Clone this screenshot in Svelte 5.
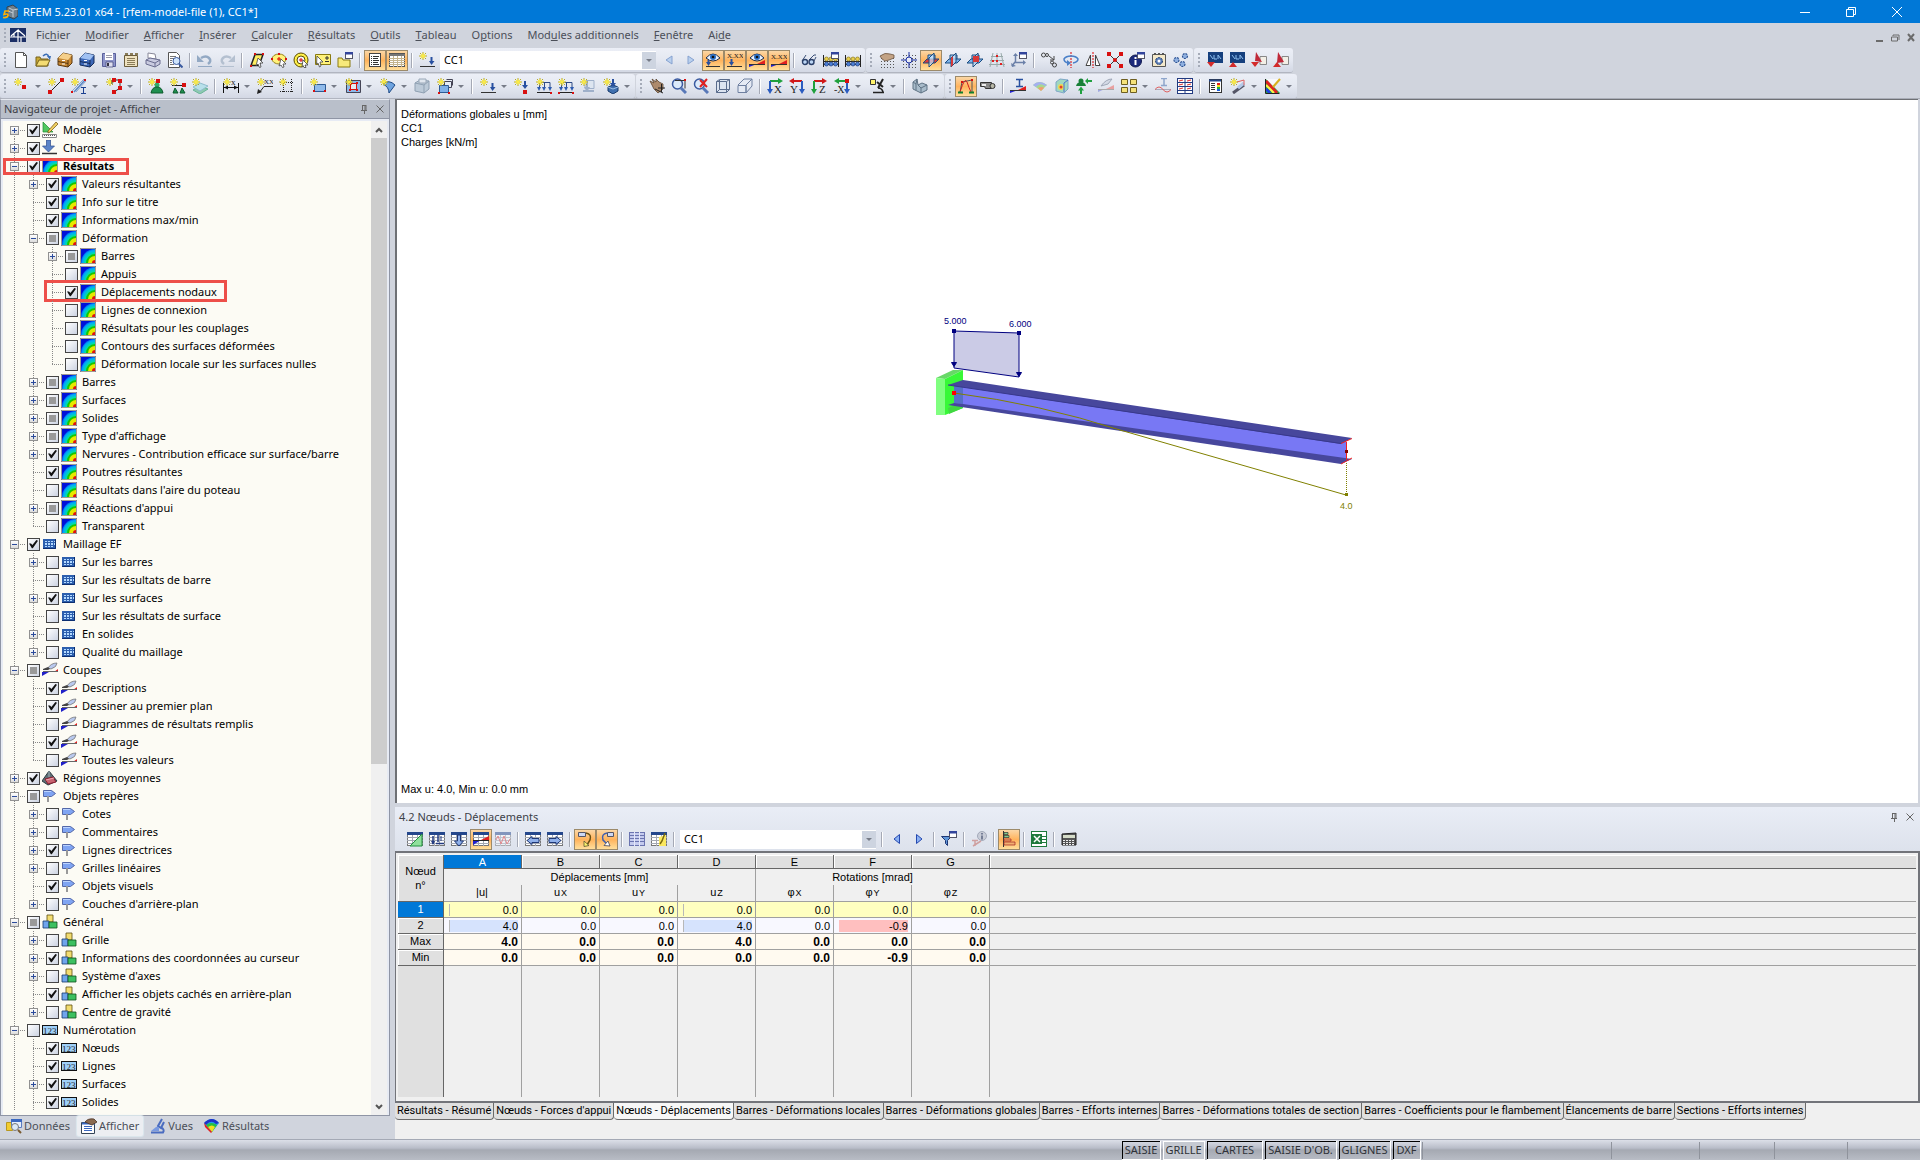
<script lang="ts">
	type Check = 'on' | 'off' | 'partial';
	type Row = [level: number, toggle: string, check: Check, icon: string, label: string];

	// shared bits of the toolbar glyphs, all on a 16x16 grid
	const star =
		'<path d="M4 0v8M0 4h8M1 1l6 6M7 1L1 7" stroke="#b5a82c"/><path d="M4 1v6M1 4h6M2 2l4 4M6 2L2 6" stroke="#ffee3c"/>';
	const dot = (x: number, y: number) => `<rect x="${x}" y="${y}" width="4" height="4" fill="#d81010"/>`;
	const speck = (x: number, y: number) => `<rect x="${x}" y="${y}" width="2" height="2" fill="#d81010"/>`;
	const letter = (x: number, y: number, text: string, size = 9) =>
		`<text x="${x}" y="${y}" font-size="${size}" font-family="Liberation Serif, serif" fill="#222">${text}</text>`;
	const sheet =
		'<rect x=".5" y="1.5" width="15" height="13" fill="#fff" stroke="#777"/><path d="M0 6.500h16M0 9.500h16M0 12.500h16M5.500 4v11M10.500 4v11" stroke="#a3a8b2"/><rect x="0" y="1" width="16" height="3" fill="#24478c"/>';
	const windowBox =
		'<rect x="8.5" y=".5" width="7" height="6" fill="#fff" stroke="#556"/><rect x="8" y="0" width="8" height="2.5" fill="#33459c"/>';
	const wedge =
		'<path d="M0 15V12L8 12z" fill="#2020d0"/><path d="M8 12L16 8v4z" fill="#e02020"/><path d="M0 12.500h16" stroke="#333"/>';
	const eye =
		'<path d="M1 6q7-8 14 0q-7 6-14 0z" fill="#e9f2ff" stroke="#1b2c4c"/><circle cx="8" cy="5" r="3" fill="#2b6fc4"/><circle cx="8" cy="5" r="1.3" fill="#111"/>';
	const grid =
		'<path d="M2 3.500h13M2 6.500h13M2 9.500h13M2 12.500h13M2 15.500h13" stroke="#555" stroke-dasharray="1 2"/>';
	const nodes =
		'<path d="M3 3l10 10M13 3L3 13" stroke="#333"/>' + dot(0, 0) + dot(12, 0) + dot(0, 12) + dot(12, 12);
	const axis = (a: string, b: string, flip = false) =>
		flip
			? `<path d="M13 3H4" stroke="${a}" stroke-width="2"/><path d="M0 3l5-3v6z" fill="${a}"/><path d="M13 3v9" stroke="${b}" stroke-width="2"/><path d="M13 16l-3-5h6z" fill="${b}"/>`
			: `<path d="M3 3h9" stroke="${a}" stroke-width="2"/><path d="M16 3l-5-3v6z" fill="${a}"/><path d="M3 3v9" stroke="${b}" stroke-width="2"/><path d="M3 16l-3-5h6z" fill="${b}"/>`;
	const drawer = (light: string, base: string, dark: string) =>
		`<path d="M1 6l5-5 9 2v8l-4 4-10-2z" fill="${base}" stroke="${dark}"/><path d="M1 6l5-5 9 2-4 5z" fill="${light}"/><path d="M11 8v7M1 9.500l10 2" stroke="${dark}"/><path d="M5 8.500h3M5 12h3" stroke="#fff"/>`;
	const abacus =
		'<path d="M.5 3v12M15.500 3v12M1 9.500h14M1 12.500h14" stroke="#222"/><g fill="#e9cf4b" stroke="#8a7820" stroke-width=".7"><circle cx="3.500" cy="7" r="2"/><circle cx="8" cy="7" r="2"/><circle cx="12.500" cy="7" r="2"/></g><g fill="#4b7fd6" stroke="#1b3a78" stroke-width=".7"><circle cx="3.500" cy="12" r="2"/><circle cx="8" cy="12" r="2"/><circle cx="12.500" cy="12" r="2"/></g>';
	const lens =
		'<circle cx="6.500" cy="6" r="5" fill="#dceafa" stroke="#3a5aa0" stroke-width="1.500"/><path d="M10 10l5 5" stroke="#5878b8" stroke-width="3"/>';
	const plane = (slab: string) =>
		`<path d="M5 3h7v7H5z" fill="#a9cef2" stroke="#1b4c80"/><path d="M0 11l4-4h12l-4 4z" fill="${slab}" stroke="#1b4c80"/><path d="M6 6l5-5v9l-5 5z" fill="#cfe4fb" stroke="#1b4c80" fill-opacity=".7"/>`;
	const loads =
		'<path d="M3 4.500h11v6M3.500 4v7M8.500 4v7" stroke="#2d4a86"/><path d="M1 9h4l-2 4zM6 9h4l-2 4zM12 9h4l-2 4z" fill="#2d5bb0"/><path d="M1 14.500h14" stroke="#222"/>';
	const dlubal =
		'<rect x="1" y="0" width="15" height="11" fill="#16407e"/><path d="M3 3l3 4M7 3v4h3M11 7V3l3 4" stroke="#8fc0f0"/>';

	const glyphs: Record<string, string> = {
		app: '<path d="M5 3l6-2 5 4v7l-4 3-7-3z" fill="#71808c" stroke="#34424e"/><path d="M7 4l4 2v7M11 6l5-1M6 7l5 2" stroke="#c2ccd4"/><path d="M7 7H3L2 10.500q4-1.500 4 1Q5.500 14 1 13.500" stroke="#ffb000" stroke-width="1.600"/>',
		doc: '<rect width="16" height="14" y="1" fill="#1c2f66"/><path d="M0 10h16M1 9l7-6v12M8 3l7 6M11 10v5M4 7v3" stroke="#fff" stroke-width="1.200"/>',
		new: '<path d="M2.500.5h8l3 3v12h-11z" fill="#fff" stroke="#555"/><path d="M10.500.5v3h3" stroke="#555"/>',
		open: '<path d="M1 14V5h4l1 2h7v7z" fill="#c9a935" stroke="#76631d"/><path d="M1 14l3-6h11l-3 6z" fill="#f4dc72" stroke="#76631d"/><path d="M8 4q4-4 6 1" stroke="#3a6db5" stroke-width="1.500"/><path d="M12 4h4l-1 4z" fill="#3a6db5"/>',
		drawer: drawer('#f5cf8a', '#c98a35', '#5a3810'),
		drawerBlue: drawer('#9fc0f2', '#3d68b8', '#142c5c'),
		save: '<path d="M1.500 1.500h13v13h-13z" fill="#8d94c9" stroke="#5a609c"/><path d="M4 1h8v7H4z" fill="#fff"/><path d="M5 10h7v5H5z" fill="#dde" stroke="#3d4377" stroke-width=".7"/><path d="M5 3.500h6M5 5.500h6" stroke="#99a"/><path d="M6 11h2v3H6z" fill="#334"/>',
		planner:
			'<path d="M1.500 3.500h13v11h-13z" fill="#efe2c0" stroke="#6b5c3a"/><path d="M2 1h3v2H2zM7 1h3v2H7zM12 1h3v2h-3z" fill="#8a7c58"/><path d="M4 6.500h8M4 8.500h8M4 10.500h8M4 12.500h8" stroke="#8a7c58"/>',
		print: '<path d="M3 1l7 1 1 5-8-1z" fill="#fff" stroke="#889"/><path d="M1 8l4-2 10 2v4l-5 3-9-3z" fill="#c9cbe0" stroke="#6a6d90"/><path d="M1 8l9 3v4M10 11l5-3" stroke="#6a6d90"/>',
		preview:
			'<path d="M1.500.5h8l3 3v12h-11z" fill="#fff" stroke="#555"/><path d="M3 4.500h6M3 6.500h4M3 8.500h2M3 10.500h2M3 12.500h4" stroke="#777"/><circle cx="9.500" cy="9" r="3.500" fill="#cfe4fb" stroke="#3a5aa0"/><path d="M12 12l3.500 3.500" stroke="#3a5aa0" stroke-width="2"/>',
		undo: '<path d="M4 6q5-3 8 0t-1 6" stroke="#93a9c4" stroke-width="2.500"/><path d="M0 3v7h7z" fill="#93a9c4"/><path d="M1 14.500h14" stroke="#93a9c4"/>',
		redo: '<path d="M12 6Q7 3 4 6t1 6" stroke="#b4c0d0" stroke-width="2.500"/><path d="M16 3v7H9z" fill="#b4c0d0"/><path d="M1 14.500h14" stroke="#b4c0d0"/>',
		selRhomb:
			'<path d="M2 13.500L6 2.500h8l-4 11z" fill="#ffee60" stroke="#222" stroke-width="1.500"/>' +
			speck(1, 13) + speck(5, 1) + speck(13, 1) +
			'<path d="M9 6l5 5h-3l1 4-1.500.5L9 12l-2 2z" fill="#fff" stroke="#444" stroke-width=".8"/>',
		selEllipse:
			'<ellipse cx="8" cy="7" rx="7" ry="5" fill="#fff27a" stroke="#9a8420"/><path d="M8 5v4M6 7h4" stroke="#d00"/>' +
			speck(0, 6) + speck(7, 1) + speck(14, 6) +
			'<path d="M10 7l5 5h-3l1 3-1.500.5L10 13l-2 1z" fill="#fff" stroke="#444" stroke-width=".8"/>',
		selRing:
			'<circle cx="8" cy="8" r="7" fill="#fff04a" stroke="#5d4e00"/><circle cx="8" cy="8" r="4" fill="#f4f6fb" stroke="#5d4e00"/><path d="M8 6v4M6 8h4" stroke="#d00"/><path d="M10 8l5 5h-3l1 2.500h-2l-1-2-1 1z" fill="#fff" stroke="#444" stroke-width=".8"/>',
		selNote:
			'<path d="M.5 2.500h15v10H.5z" fill="#fff27a" stroke="#8a7a10"/><path d="M10 6h4M12 4v4M10 9.500h4" stroke="#333"/><path d="M2 4l6 6H5l1 4-1.500 1L3 11l-1.500 1z" fill="#fff" stroke="#444" stroke-width=".8"/>',
		folder: '<path d="M1 6h4l1 2h7v7H1z" fill="#f8ea7a" stroke="#8a7a10"/>' + windowBox,
		list: '<rect x="2.500" y="1.500" width="11" height="13" fill="#fff" stroke="#444"/><path d="M4 4.500h1M4 6.500h1M4 8.500h1M4 10.500h1M4 12.500h1M6 4.500h6M6 6.500h5M6 8.500h6M6 10.500h5M6 12.500h6" stroke="#333"/>',
		table: '<rect x=".5" y="1.500" width="15" height="13" fill="#fff" stroke="#555"/><path d="M0 6.500h16M0 8.500h16M0 10.500h16M0 12.500h16M4.500 4v11M8.500 4v11M12.500 4v11" stroke="#c4b48e"/><path d="M0 2h16v2H0z" fill="#777"/>',
		loadCase:
			star + '<path d="M1 14.500h15" stroke="#333"/><path d="M12.500 5v6" stroke="#2850a0" stroke-width="2"/><path d="M10 9h5.500l-3 4z" fill="#2850a0"/>',
		prev: '<path d="M11 4v8L5 8z" fill="#b9d0ee" stroke="#86a2d0"/>',
		next: '<path d="M5 4v8l6-4z" fill="#b9d0ee" stroke="#86a2d0"/>',
		prevBold: '<path d="M10.500 3.500v9L5 8z" fill="#8ab0f2" stroke="#2448b0"/>',
		nextBold: '<path d="M5.500 3.500v9L11 8z" fill="#8ab0f2" stroke="#2448b0"/>',
		eyeLoad:
			eye + '<path d="M3.500 8v4" stroke="#2850a0" stroke-width="2"/><path d="M1 10h5l-2.500 4z" fill="#2850a0"/><path d="M1 14.500h14" stroke="#333"/>',
		valLoad:
			letter(0, 6, 'X.XX', 7) +
			'<path d="M4.500 7v4" stroke="#2850a0" stroke-width="2"/><path d="M2 10h5l-2.500 4z" fill="#2850a0"/><path d="M0 14.500h15" stroke="#333"/>',
		eyeRes: eye + wedge,
		valRes: letter(0, 7, 'X.XX', 7) + wedge,
		glasses:
			'<path d="M1 9l4-6M8 8l5-5h2" stroke="#3b5078"/><circle cx="4" cy="10" r="2.500" fill="#bcd6f5" stroke="#2a3f68" stroke-width="1.400"/><circle cx="10.500" cy="10" r="2.500" fill="#bcd6f5" stroke="#2a3f68" stroke-width="1.400"/><path d="M13 9l2-4" stroke="#3b5078"/>',
		abacusWin: abacus + windowBox,
		abacus,
		handGrid: grid + '<path d="M1 4q5-4 10-2l4 1v3l-5 2-4 1-3-2z" fill="#c3a385" stroke="#6c5440" stroke-width=".8"/>',
		snap: grid + '<path d="M8 0v16M0 8h16" stroke="#1a2fa0"/><circle cx="8" cy="8" r="3" fill="#e9ecf5" stroke="#1a2fa0"/>',
		planeXY: plane('#d83838'),
		planeXZ: plane('#7fb4ea') + '<path d="M6 6l2-2v9l-2 2z" fill="#d83838"/>',
		planeYZ: plane('#7fb4ea') + '<path d="M6 4h6v6H6z" fill="#d83838"/>',
		lineGrid:
			'<path d="M4 1L1 15M8 1v14M12 1l3 14M2 4.500h12M1 8.500h14M0 12.500h16" stroke="#9aa"/><path d="M7 3h2v2H7zM3 8h2v2H3zM11 11h2v2h-2zM7 8h2v2H7z" fill="#e02020"/>',
		csys: '<path d="M4.500 3v7M4 10.500h8M4 10l-3 4" stroke="#6b80a8" stroke-width="1.500"/><path d="M2 4l2.500-3L7 4zM12 8l3 2.500-3 2.500zM0 11l1 4 4-1z" fill="#6b80a8"/>' + windowBox,
		move: '<g stroke="#444"><circle cx="2.500" cy="3" r="2"/><circle cx="6" cy="3" r="1.500"/><circle cx="11" cy="10.500" r="1.500"/><circle cx="13.500" cy="13" r="2"/><path d="M8 4l5 4M13 4v4H9"/></g>',
		rotate:
			'<path d="M8 0v16" stroke="#d00" stroke-dasharray="2 1"/><path d="M5 11Q1 10 1 7q2-3 7-3t7 3q0 3-5 4" stroke="#4a80c8" stroke-width="1.500"/><path d="M4 8v6l4-3z" fill="#4a80c8"/>',
		mirror: '<path d="M8 0v16" stroke="#d00" stroke-dasharray="2 1"/><path d="M5.500 3v10.500H1zM10.500 3v10.500H15z" fill="#fff" stroke="#444"/>',
		cross: nodes + '<circle cx="8" cy="8" r="2" fill="#d81010"/>',
		info: '<circle cx="6.500" cy="9" r="6" fill="#1c2a7c" stroke="#111a50"/><path d="M6.500 8v5M6.500 5v2" stroke="#fff" stroke-width="2"/>' + windowBox,
		gearDoc:
			'<path d="M1.500 2.500h13v12h-13z" fill="#f4e9ca" stroke="#555"/><path d="M3 1h2v2H3zM7 1h2v2H7zM11 1h2v2h-2z" fill="#555"/><circle cx="8" cy="9" r="3.500" fill="#5a7db8" stroke="#24406f" stroke-dasharray="2 1"/><circle cx="8" cy="9" r="1.500" fill="#fff"/>',
		gears:
			'<g fill="#8fb0e0" stroke="#2f5494" stroke-width="1.200"><circle cx="12" cy="4" r="2.500" stroke-dasharray="2 1"/><circle cx="3.500" cy="8" r="2.500" stroke-dasharray="2 1"/><circle cx="9.500" cy="12" r="2.500" stroke-dasharray="2 1"/></g>',
		dlIn: dlubal + '<path d="M0 10h8l-4 5z" fill="#d32a2a"/>',
		dlOut: dlubal + '<path d="M0 15h8l-4-5z" fill="#d32a2a"/>',
		acIn: '<path d="M9 4.500h6.500v8H9z" fill="#f3efe6" stroke="#888"/><path d="M5 0l6 10-7-1z" fill="#c02838"/><path d="M0 10h8l-4 5z" fill="#d32a2a"/>',
		acOut: '<path d="M9 4.500h6.500v8H9z" fill="#f3efe6" stroke="#888"/><path d="M5 0l6 10-7 1z" fill="#c02838"/><path d="M0 15h8l-4-5z" fill="#d32a2a"/>',

		node: star + dot(8, 7),
		line: '<path d="M2 14L14 2" stroke="#222"/>' + dot(0, 12) + dot(12, 0) + star,
		member:
			'<path d="M1 13L13 1M5 14L15 3" stroke="#8aa6cc"/><path d="M3 14L14 2" stroke="#5a86c4" stroke-width="1.500"/>' +
			star + speck(0, 13) + speck(13, 1) + '<path d="M10 9.500h5M12.500 10v5M10 15.500h5" stroke="#1b4090"/>',
		polyline: star + '<path d="M6 6V2h8v8l-6 4" stroke="#333"/>' + dot(6, 0) + dot(12, 1) + dot(6, 12) + dot(12, 8),
		support: '<circle cx="9" cy="7" r="2.500" fill="#2fae6a"/><path d="M3 15q1-6 6-6t6 6z" fill="#1f8f50" stroke="#0c5a2c"/>' + star + dot(8, 1),
		hinge: '<path d="M2 7.500h12" stroke="#222"/>' + dot(12, 5) + '<path d="M3 15l2-5 3 5zM10 15l2-5 3 5z" fill="#1f8f50" stroke="#0c5a2c"/>' + star,
		elastic: '<path d="M1 12l7-4 8 3-8 5z" fill="#8ecab0" stroke="#6ab49a"/><path d="M1 9l7-4 8 3-8 5z" fill="#b8e0ea" stroke="#8fbccc"/>' + star,
		dim: '<path d="M1 9.500h14M.5 5v10M15.500 5v10" stroke="#111"/><path d="M1 9.500l4-2v4zM15 9.500l-4-2v4z" fill="#111"/>' + letter(8, 7, 'x', 9) + star,
		comment: '<path d="M2 15l5-6.500h9" stroke="#222"/><path d="M0 16l1-5 4 3z" fill="#222"/>' + letter(7, 6, 'XX', 7) + star,
		grid: '<path d="M4.500 1v14M12.500 1v14M1 4.500h14M1 13.500h14" stroke="#222" stroke-dasharray="1 1"/>' + star,
		surface: '<path d="M4.500 6.500h11v7h-11z" fill="#8fbaea" stroke="#2d5a94"/>' + speck(3, 12) + speck(14, 12) + star,
		opening:
			'<path d="M1.500 2.500h14v12h-14z" fill="#8db8ea" stroke="#445"/><path d="M5.500 5.500h6v6h-6z" fill="#e5eaf4" stroke="#d81010"/>' +
			speck(4, 4) + speck(11, 4) + speck(4, 11) + speck(11, 11) + star,
		curved: '<path d="M3 6q6-5 12 1l-6 8q0-6-6-9z" fill="#6fa4e0" stroke="#1e4a86"/>' + star,
		solid: '<path d="M1 5l5-3 9 1v8l-5 4-9-2z" fill="#bccad8" stroke="#8fa0b2"/><path d="M1 5l9 2 5-4M10 7v8" stroke="#8fa0b2"/><path d="M5 1h7v4H5z" fill="#dfe6ee" stroke="#9aa8b8"/>',
		solidNew:
			'<path d="M7.500 3.500h7v6h-7zM9.500 1.500h6v6" fill="#e5ecf8" stroke="#445"/><path d="M2.500 7.500h9v7h-9z" fill="#7fb0e8" stroke="#2d5a94"/>' +
			speck(1, 14) + speck(11, 14) + star,
		nodeLoad: star + '<path d="M11 3v5" stroke="#2850a0" stroke-width="2"/><path d="M8 7h6l-3 4z" fill="#2850a0"/>' + dot(9, 12),
		lineLoad: loads + speck(14, 14) + star,
		memberLoad: loads + speck(0, 14) + speck(14, 14) + star,
		surfLoad: '<path d="M5 2.500h9v8H5z" fill="#dde5f0" stroke="#9fb0ca"/><path d="M3 13h11M7 3v8" stroke="#9fb0ca" stroke-width="2"/><path d="M4 9h6l-3 5z" fill="#9fb0ca"/>' + star,
		freeLoad: '<path d="M5 9l5-2 5 2v4l-5 3-5-3z" fill="#3f6fae" stroke="#173a6c"/><path d="M5 9l5 2 5-2" stroke="#9cc0ea"/><path d="M10 1v5" stroke="#2850a0" stroke-width="2"/><path d="M7 5h6l-3 4z" fill="#2850a0"/>' + star,
		pan: '<path d="M1 3l4 2-2-4 4 3V1l3 3 4 2v5l-5 4-4-4z" fill="#ad8a6c" stroke="#5c4634" stroke-width=".8"/><path d="M12.500 6v8M9 10h7M6 11l8 4" stroke="#222"/>',
		zoomWin: lens + '<path d="M4 2.500h10v8" stroke="#333"/>' + speck(13, 1),
		zoomAll: lens + '<path d="M7 2l7 7M14 1L7 9" stroke="#e02020" stroke-width="2"/>',
		wire: '<path d="M1.500 3.500l3-2h10v10l-3 3h-10z" fill="#dce4f0" stroke="#5a6c8c"/><path d="M1.500 3.500h10v11M11.500 3.500l3-2M4.500 2v9.500h10M4.500 11.500l-3 3" stroke="#5a6c8c"/>',
		persp: '<path d="M1 7.500h8v7H1zM1 7l6-6h8L9 7M15 1v7l-6 7M9 7v8" fill="#e5eaf4" stroke="#6f80a0"/>',
		axX: axis('#1fa03c', '#2b5cc0') + letter(7, 15, 'X', 11),
		axY: axis('#d01818', '#2b5cc0', true) + letter(1, 15, 'Y', 11),
		axZ: axis('#d01818', '#1fa03c') + letter(8, 15, 'Z', 11),
		axNegX: axis('#1fa03c', '#2b5cc0', true) + dot(11, 1) + letter(0, 15, '-X', 10),
		view: '<path d="M1.500 1.500h5v5h-5z" fill="#fff36b" stroke="#333"/><path d="M14 1l-5 9M8 4l6 5" stroke="#222" stroke-width="2"/><path d="M4 14.500h11M9 10q4 0 5 4" stroke="#222" stroke-width="1.500"/>',
		solidView: '<path d="M1 4l4-3 1 6 4-2 5 2v5l-6 3-8-4z" fill="#a9bccb" stroke="#5f7284"/><path d="M1 4l3 2v6M4 6l1-5M6 7l3 3v5M9 10l6-3" stroke="#5f7284"/>',
		frame: '<path d="M2 14L4 4l10-2v12" stroke="#555"/><path d="M2 14Q7-2 9 4t4 10" stroke="#d02020"/><path d="M0 14.500h5M11 14.500h5" stroke="#108030" stroke-width="2"/>' + speck(3, 3) + speck(13, 1),
		camera: '<path d="M.5 4.500h11v6h-6l-1-2h-4z" fill="#888" stroke="#333"/><path d="M2 6h4v2H2z" fill="#eee"/><circle cx="12.500" cy="8" r="2.500" fill="#b8b8a8" stroke="#333"/>',
		resMember: '<path d="M6 1.500h7M9.500 1v8M6 8.500h7" stroke="#2850a0" stroke-width="1.500"/>' + wedge,
		resSurf: '<path d="M1 7q6-6 14 0l-6 6z" fill="#a8d890"/><path d="M1 7q6-6 14 0l-2 1q-5-4-9 1z" fill="#a4b0f0"/><path d="M6 10q4-2 6 0l-3 3z" fill="#f0a070"/>',
		resSolid: '<path d="M2 4l4-3 8 1v9l-4 4-8-2z" fill="#a0d8c0" stroke="#7fa8c8"/><circle cx="7" cy="9" r="3" fill="#f0d850"/><circle cx="7" cy="9" r="1.500" fill="#e04030"/><path d="M10 5v9M10 5l4-3" stroke="#4d6fd0"/>',
		reaction:
			'<circle cx="5" cy="3" r="2.500" fill="#188038"/><path d="M0 8q1-4 5-4t5 4z" fill="#188038"/><path d="M9 3l3-3v6z" fill="#20a040"/><path d="M11 3h5M5 12v4" stroke="#20a040" stroke-width="2"/><path d="M2 12.500h6l-3-4z" fill="#20a040"/>',
		sectionsDim: '<path d="M3 8q5-7 11-7l-4 5z" fill="#d4dae6" stroke="#a0a8b8"/><path d="M0 14v-3h7z" fill="#a0a8e0"/><path d="M8 11l8-4v4z" fill="#e8a0a0"/><path d="M0 11.500h16" stroke="#aaa"/>',
		quad: '<g fill="#f5e27a" stroke="#6d5e20"><path d="M.5 1.500h6v5h-6zM9.500 1.500h6v5h-6zM.5 9.500h6v5h-6zM9.500 9.500h6v5h-6z"/></g>',
		wave: '<path d="M6 .5h6M9 0v7M6 7.500h6" stroke="#8fa6cc" stroke-width="1.500"/><path d="M0 11.500h16" stroke="#aab"/><path d="M0 11.500q4-5 8 0t8 0" stroke="#e06060"/>',
		windows:
			'<rect x=".5" y=".5" width="15" height="15" fill="#fff" stroke="#223a80"/><path d="M8 0v16M0 4.500h16M0 8.500h16M0 12.500h16" stroke="#223a80"/><path d="M2 3l4-1M10 3l4-1M2 7l4-1M10 7l4-1M2 11l4-1M10 11l4-1" stroke="#e03030"/>',
		report:
			'<rect x="2.500" y="1.500" width="12" height="13" fill="#fff" stroke="#333"/><path d="M2 2.500h12" stroke="#24478c" stroke-width="2"/><path d="M4 5.500h4M4 7.500h4M4 9.500h4M4 11.500h4" stroke="#333"/><path d="M10 5h3v2h-3z" fill="#e02020"/><path d="M10 7h3v2h-3z" fill="#f0e020"/><path d="M10 9h3v2h-3z" fill="#20b040"/><path d="M10 11h3v2h-3z" fill="#2060e0"/>',
		sectionNew: '<path d="M3 15L14 7" stroke="#556" stroke-width="3"/><path d="M8 10l6-5" stroke="#b4c8e8" stroke-width="3"/><path d="M7 4l7-2v5" stroke="#e06060"/>' + star,
		colors: '<path d="M1 1v14h14z" fill="#20b040"/><path d="M1 1h14L8 8z" fill="#f6f7fb"/><path d="M1 3l11 12" stroke="#e02020" stroke-width="3"/><path d="M1 7l8 8" stroke="#fff04a" stroke-width="2"/><path d="M1 11l4 4" stroke="#2040e0" stroke-width="3"/><path d="M8 9l7-8" stroke="#d8b020" stroke-width="2"/><path d="M.5 1v14.500h14" stroke="#222"/>',

		tabModel: sheet + '<path d="M15 3L3 15h12z" fill="#8fe09c" stroke="#209040"/>',
		tabLoads: sheet + '<path d="M4 5v8M9 4v7M7 12.500h8" stroke="#223a80" stroke-width="1.500"/><path d="M2 10h4l-2 4z" fill="#223a80"/><path d="M12 5v5" stroke="#223a80"/>',
		tabDown: sheet + '<path d="M6.500 4h3v6h3L8 15l-4.500-5h3z" fill="#8fb0ea" stroke="#1d3675"/>',
		tabRes: sheet + '<path d="M0 14v-4l8-1z" fill="#2020d0"/><path d="M8 9l8-4v4z" fill="#e02020"/><path d="M0 9.500h16" stroke="#222"/>',
		tabWave: '<g opacity=".5">' + sheet + '<path d="M1 9l2-4 3 8 3-8 3 8 3-5" stroke="#e03030"/></g>',
		tabPrev: sheet + '<path d="M7 5.500v2h7v4H7v2L2 9.500z" fill="#8fb0ea" stroke="#1d3675"/>',
		tabNext: sheet + '<path d="M9 5.500v2H2v4h7v2l5-4z" fill="#8fb0ea" stroke="#1d3675"/>',
		jumpTo: '<path d="M1.500 1.500h7v4h-7z" fill="#cdd8f4" stroke="#556"/><path d="M9 2q6 1 4 7l-3 5" stroke="#6a5010" stroke-width="1.500"/><path d="M7 10v5.500l5-1z" fill="#fff36b" stroke="#553" stroke-width=".8"/>',
		jumpBack: '<path d="M8.500 1.500h6v4h-6z" fill="#cdd8f4" stroke="#556"/><path d="M8 2q-6 1-4 7l4 4" stroke="#4060b0" stroke-width="1.500"/><path d="M5 14.500l6 .5-2-5z" fill="#fff" stroke="#445" stroke-width=".8"/>',
		rows: '<rect x=".5" y="1.500" width="15" height="13" fill="#c4cbee" stroke="#6a74b0"/><path d="M0 4.500h16M0 7.500h16M0 10.500h16" stroke="#6a74b0"/><path d="M5.500 1v14M10.500 1v14" stroke="#e4e8fa"/>',
		edit: sheet + '<path d="M8 15V6l7-2v11z" fill="#fbe860"/><path d="M14 2l-3 8-2 3" stroke="#7a6a10" stroke-width="1.500"/>',
		filter: '<path d="M.5 5.500h10l-4 4v5l-2-2v-3z" fill="#5f96d8" stroke="#1d3675"/>' + windowBox,
		infoDim: '<circle cx="11" cy="5" r="4.500" fill="#c9cdd8" stroke="#a4aaba"/><path d="M11 4.500v4M11 2v1.500" stroke="#5a6480" stroke-width="1.500"/><path d="M1 9.500h6M4 10v5M2 15l8-5" stroke="#cfa0a0" stroke-width="1.500"/>',
		bars: '<path d="M2.500 0v16" stroke="#333"/><path d="M3 1.500h4v2H3zM3 4.500h5v2H3z" fill="#7fd090" stroke="#333" stroke-width=".7"/><path d="M3 8h7v2H3zM3 11h11v3H3z" fill="#f0b070" stroke="#a02020" stroke-width=".7"/>',
		excel: '<rect x=".5" y=".5" width="15" height="15" fill="#fff" stroke="#1e7a3c"/><path d="M1 3h10v10H1z" fill="#1e7a3c"/><path d="M3 5l6 6M9 5l-6 6" stroke="#fff" stroke-width="1.500"/><path d="M11 5.500h4M11 8.500h4M11 11.500h4" stroke="#1e7a3c"/>',
		calc: '<path d="M1 3l14-1v12H1z" fill="#555" stroke="#222"/><path d="M2 4h12v3H2z" fill="#d5dcc8"/><path d="M2 9.500h12M2 11.500h12M2 13.500h12" stroke="#eee" stroke-dasharray="2 1"/>',

		model: '<path d="M1 0v10h10z" fill="#50c860" stroke="#1d8a30" stroke-width=".7"/><path d="M6 9l8-9 2 2-8 8-2 1z" fill="#f0d060" stroke="#6a4a10" stroke-width=".7"/><path d="M.5 12.500h14v3H.5z" fill="#fff" stroke="#888"/><path d="M2 13.500h12" stroke="#555" stroke-dasharray="1 1"/>',
		loads: '<path d="M4.500 0h4v6h4l-6 6-6-6h4z" fill="#5c84c8" stroke="#2c4a8c" stroke-width=".7"/><path d="M0 13.500h15" stroke="#333" stroke-width="1.500"/>',
		results:
			'<path d="M0 0h16v16H0z" fill="#0010d8"/><path d="M15 1A14 14 0 0 0 1 15h14z" fill="#0078f8"/><path d="M15 2A13 13 0 0 0 2 15h13z" fill="#00b0f0"/><path d="M15 4A11 11 0 0 0 4 15h11z" fill="#00d8b0"/><path d="M15 6A9 9 0 0 0 6 15h9z" fill="#18c800"/><path d="M15 8A7 7 0 0 0 8 15h7z" fill="#e8e800"/><path d="M15 12A3 3 0 0 0 12 15h3z" fill="#e01010"/><path d="M.5.5h15v15H.5z" stroke="#a09a90"/>',
		mesh: '<path d="M1 3h13v10H1z" fill="#2c5fae"/><path d="M3 5h2v1H3zM6 5h2v1H6zM9 5h2v1H9zM3 7h2v2H3zM6 7h2v2H6zM9 7h2v2H9zM3 10h2v1H3zM6 10h2v1H6zM9 10h2v1H9zM12 5h1v1h-1zM12 7h1v2h-1z" fill="#b4daff"/><path d="M1 12.500h12.500V3" stroke="#0c2e70"/>',
		section:
			'<path d="M6 6Q9 1 15 1q0 4-6 6z" fill="#b9c9ee" stroke="#777" stroke-width=".8"/><path d="M1 7l5-2 2 2-2 1H1z" fill="#444"/><path d="M0 14v-4h7z" fill="#2020c8"/><path d="M12 10l4-3v3z" fill="#e02020"/><path d="M1 9.500h15" stroke="#666"/>',
		regions: '<path d="M7 1L0 11l6 4 9-4z" fill="#5d6e74" stroke="#2c3a40"/><path d="M3 9l8-2 3 5-8 2z" fill="#c86470" stroke="#8c2030"/><path d="M4 10l8-2" stroke="#f0a8b0"/><path d="M7 1v6" stroke="#9fb0b8"/>',
		guide: '<path d="M1.500 2.500h8l4 3-4 3h-8z" fill="#7fa4f2" stroke="#5468a8"/><path d="M2 3.500h7" stroke="#bcd4ff"/><path d="M6 8v6" stroke="#999" stroke-width="2"/>',
		general: '<path d="M5 1h6v7H5z" fill="#f2dc70" stroke="#5d4e10" stroke-width=".8"/><path d="M1 7h6v7H1z" fill="#6fa4ec" stroke="#163a70" stroke-width=".8"/><path d="M7 8h8v6H7z" fill="#3cc060" stroke="#10501c" stroke-width=".8"/>',
		numbers: '<rect x=".5" y="3.500" width="15" height="9" fill="#9fd0f8" stroke="#111"/>' + letter(1, 12, '123', 9),
		dataTab: '<path d="M.5 4.500h6v8h-6z" fill="#f2cc30" stroke="#b89820"/><path d="M5.500 1.500h10v8h-10z" fill="#e5eefc" stroke="#5a7cc0"/><path d="M5 2.500h11" stroke="#3a68c0" stroke-width="3"/><circle cx="9" cy="9" r="3.500" fill="#dbe9f8" stroke="#777"/><path d="M12 12l3 3" stroke="#7a5a30" stroke-width="2"/>',
		displayTab: '<path d="M.5 4.500h13v11H.5z" fill="#fff" stroke="#345"/><path d="M1 5.500h13" stroke="#3a68c0" stroke-width="2"/><path d="M3 8.500h8M3 10.500h8M3 12.500h8" stroke="#3a68c0"/><path d="M4 4q3-4 9-3l3 3-5 3z" fill="#8a6a50" stroke="#4a3424" stroke-width=".8"/>',
		viewsTab: '<path d="M12 1L8 8l3 2 3-6M1 14.500h12q2-3-2-5" stroke="#4a6cc0" stroke-width="2"/><path d="M1 13l5-4h3v4z" fill="#7a9ae0"/>',
		resultsTab: '<path d="M0 5q8-8 15 0l-7 9z" fill="#20a0e8"/><path d="M0 5q8-8 15 0l-3 1q-5-5-10 1z" fill="#2030c8"/><path d="M2 7q5-4 11 0l-5 7z" fill="#28c040"/><path d="M4 9q4-3 7 0l-3 5z" fill="#f0e020"/><path d="M0 5l8 9-1 1-6-6z" fill="#e02020"/>',
		pin: '<path d="M6 4.500h4M6.500 4v5M9 4v5M10 4v5M5 9.500h6M8.500 10v3" stroke="#666"/>',
		close: '<path d="M4.500 4.500l7 7M11.500 4.500l-7 7" stroke="#666"/>'
	};

	// '|' separator, trailing '*' pressed, trailing '+' has a drop-down arrow
	const topBars = [
		'new open drawer drawerBlue save planner print preview | undo redo | selRhomb selEllipse selRing selNote folder | list* table* | loadCase combo prev next eyeLoad* valLoad* eyeRes* valRes* | glasses abacusWin abacus',
		'handGrid snap planeXY* planeXZ planeYZ lineGrid csys | move rotate mirror cross info gearDoc gears',
		'dlIn dlOut acIn acOut'
	];
	const lowBars = [
		'node+ line member+ polyline+ | support hinge elastic | dim+ comment grid | surface+ opening+ curved+ solid solidNew+ | loadCase+ nodeLoad lineLoad memberLoad surfLoad freeLoad+',
		'pan zoomWin zoomAll wire persp | axX axY axZ axNegX+ view+ | solidView+',
		'frame* camera | resMember resSurf resSolid reaction sectionsDim quad+ wave windows | report sectionNew+ colors+'
	];
	const tableBar =
		'tabModel tabLoads tabDown tabRes* tabWave | tabPrev tabNext | jumpTo* jumpBack* | rows edit | combo | prevBold nextBold | filter | infoDim | bars* | excel | calc';

	// label split around the access key
	const menus = [
		['Fic', 'h', 'ier'],
		['', 'M', 'odifier'],
		['', 'A', 'fficher'],
		['', 'I', 'nsérer'],
		['', 'C', 'alculer'],
		['', 'R', 'ésultats'],
		['', 'O', 'utils'],
		['', 'T', 'ableau'],
		['O', 'p', 'tions'],
		['Mod', 'u', 'les additionnels'],
		['', 'F', 'enêtre'],
		['Ai', 'd', 'e']
	];

	const tree: Row[] = [
		[0, '+', 'on', 'model', 'Modèle'],
		[0, '+', 'on', 'loads', 'Charges'],
		[0, '-', 'on', 'results', 'Résultats'],
		[1, '+', 'on', 'results', 'Valeurs résultantes'],
		[1, '', 'on', 'results', 'Info sur le titre'],
		[1, '', 'on', 'results', 'Informations max/min'],
		[1, '-', 'partial', 'results', 'Déformation'],
		[2, '+', 'partial', 'results', 'Barres'],
		[2, '', 'off', 'results', 'Appuis'],
		[2, '', 'on', 'results', 'Déplacements nodaux'],
		[2, '', 'off', 'results', 'Lignes de connexion'],
		[2, '', 'off', 'results', 'Résultats pour les couplages'],
		[2, '', 'off', 'results', 'Contours des surfaces déformées'],
		[2, '', 'off', 'results', 'Déformation locale sur les surfaces nulles'],
		[1, '+', 'partial', 'results', 'Barres'],
		[1, '+', 'partial', 'results', 'Surfaces'],
		[1, '+', 'partial', 'results', 'Solides'],
		[1, '+', 'partial', 'results', "Type d'affichage"],
		[1, '+', 'on', 'results', 'Nervures - Contribution efficace sur surface/barre'],
		[1, '', 'on', 'results', 'Poutres résultantes'],
		[1, '', 'off', 'results', "Résultats dans l'aire du poteau"],
		[1, '+', 'partial', 'results', "Réactions d'appui"],
		[1, '', 'off', 'results', 'Transparent'],
		[0, '-', 'on', 'mesh', 'Maillage EF'],
		[1, '+', 'off', 'mesh', 'Sur les barres'],
		[1, '', 'off', 'mesh', 'Sur les résultats de barre'],
		[1, '+', 'on', 'mesh', 'Sur les surfaces'],
		[1, '', 'off', 'mesh', 'Sur les résultats de surface'],
		[1, '+', 'off', 'mesh', 'En solides'],
		[1, '+', 'off', 'mesh', 'Qualité du maillage'],
		[0, '-', 'partial', 'section', 'Coupes'],
		[1, '', 'on', 'section', 'Descriptions'],
		[1, '', 'on', 'section', 'Dessiner au premier plan'],
		[1, '', 'off', 'section', 'Diagrammes de résultats remplis'],
		[1, '', 'on', 'section', 'Hachurage'],
		[1, '', 'off', 'section', 'Toutes les valeurs'],
		[0, '+', 'on', 'regions', 'Régions moyennes'],
		[0, '-', 'partial', 'guide', 'Objets repères'],
		[1, '+', 'off', 'guide', 'Cotes'],
		[1, '+', 'off', 'guide', 'Commentaires'],
		[1, '+', 'on', 'guide', 'Lignes directrices'],
		[1, '+', 'off', 'guide', 'Grilles linéaires'],
		[1, '', 'on', 'guide', 'Objets visuels'],
		[1, '+', 'off', 'guide', "Couches d'arrière-plan"],
		[0, '-', 'partial', 'general', 'Général'],
		[1, '+', 'off', 'general', 'Grille'],
		[1, '+', 'on', 'general', 'Informations des coordonnées au curseur'],
		[1, '+', 'off', 'general', "Système d'axes"],
		[1, '', 'on', 'general', 'Afficher les objets cachés en arrière-plan'],
		[1, '+', 'off', 'general', 'Centre de gravité'],
		[0, '-', 'off', 'numbers', 'Numérotation'],
		[1, '', 'on', 'numbers', 'Nœuds'],
		[1, '', 'on', 'numbers', 'Lignes'],
		[1, '+', 'on', 'numbers', 'Surfaces'],
		[1, '', 'on', 'numbers', 'Solides']
	];

	function isLast(index: number) {
		const level = tree[index][0];
		const next = tree.slice(index + 1).find((row) => row[0] <= level);
		return level > 0 && next !== undefined && next[0] < level;
	}

	const navTabs = [
		['dataTab', 'Données'],
		['displayTab', 'Afficher'],
		['viewsTab', 'Vues'],
		['resultsTab', 'Résultats']
	];

	const columns = ['A', 'B', 'C', 'D', 'E', 'F', 'G'];
	const symbols = [
		['|u|', ''],
		['u', 'X'],
		['u', 'Y'],
		['u', 'Z'],
		['φ', 'X'],
		['φ', 'Y'],
		['φ', 'Z']
	];
	const results = [
		{ head: '1', kind: 'current', cells: ['0.0', '0.0', '0.0', '0.0', '0.0', '0.0', '0.0'] },
		{ head: '2', kind: 'plain', cells: ['4.0', '0.0', '0.0', '4.0', '0.0', '-0.9', '0.0'] },
		{ head: 'Max', kind: 'extreme', cells: ['4.0', '0.0', '0.0', '4.0', '0.0', '0.0', '0.0'] },
		{ head: 'Min', kind: 'extreme', cells: ['0.0', '0.0', '0.0', '0.0', '0.0', '-0.9', '0.0'] }
	];

	function barClass(kind: string, col: number, value: string) {
		if (kind === 'extreme') return '';
		if (value.startsWith('-')) return 'bar negative';
		if (col !== 0 && col !== 3) return '';
		return value === '0.0' ? 'bar' : 'bar positive';
	}

	const sheetTabs = [
		'Résultats - Résumé',
		"Nœuds - Forces d'appui",
		'Nœuds - Déplacements',
		'Barres - Déformations locales',
		'Barres - Déformations globales',
		'Barres - Efforts internes',
		'Barres - Déformations totales de section',
		'Barres - Coefficients pour le flambement',
		'Élancements de barre',
		'Sections - Efforts internes'
	];

	// status bar: indicator panes, then the empty fields up to the right edge
	const modes: [string, number][] = [
		['SAISIE', 39],
		['GRILLE', 42],
		['CARTES', 56],
		["SAISIE D'OB.", 72],
		['GLIGNES', 52],
		['DXF', 28]
	];
	const fields = [189, 88, 75, 73, 73];
</script>

{#snippet icon(name: string)}
	<svg class="icon" viewBox="0 0 16 16" fill="none" aria-hidden="true">{@html glyphs[name]}</svg>
{/snippet}

{#snippet combo(label: string)}
	<span class="combo">
		<select aria-label={label}>
			<option>CC1</option>
		</select>
		<span class="combo-arrow"><i class="caret"></i></span>
	</span>
{/snippet}

{#snippet tools(spec: string)}
	{#each spec.split(' ') as item}
		{@const name = item.replace(/[*+]$/, '')}
		{#if item === '|'}
			<span class="separator"></span>
		{:else if item === 'combo'}
			{@render combo('Cas de charge')}
		{:else}
			<button class="tool" class:pressed={item.endsWith('*')} class:split={item.endsWith('+')} aria-label={name}>
				{@render icon(name)}
				{#if item.endsWith('+')}<i class="caret"></i>{/if}
			</button>
		{/if}
	{/each}
{/snippet}

<div class="app">
	<header class="titlebar">
		{@render icon('app')}
		<h1>RFEM 5.23.01 x64 - [rfem-model-file (1), CC1*]</h1>
		<div class="window-buttons">
			<button aria-label="Réduire"><svg viewBox="0 0 12 12"><path d="M1 6.500h10" /></svg></button>
			<button aria-label="Restaurer"><svg viewBox="0 0 12 12"><path d="M1.500 3.500h7v7h-7zM3.500 3.500v-2h7v7h-2" /></svg></button>
			<button aria-label="Fermer"><svg viewBox="0 0 12 12"><path d="M1 1l10 10M11 1L1 11" /></svg></button>
		</div>
	</header>

	<nav class="menubar">
		<span class="grip"></span>
		{@render icon('doc')}
		<div class="menus">
			{#each menus as [before, key, after]}
				<button>{before}<u>{key}</u>{after}</button>
			{/each}
		</div>
		<div class="mdi-buttons">
			<button aria-label="Réduire le document"><svg viewBox="0 0 10 10"><path d="M2 8h7" /></svg></button>
			<button aria-label="Restaurer le document"><svg viewBox="0 0 10 10"><path d="M1.500 4h6v4h-6zM3 3V2h6v5" stroke-width="1" /></svg></button>
			<button aria-label="Fermer le document"><svg viewBox="0 0 10 10"><path d="M2 1l6 7M8 1L2 8" /></svg></button>
		</div>
	</nav>

	<div class="toolbars">
		{#each [topBars, lowBars] as line}
			<div class="toolbar-line">
				{#each line as bar}
					<div class="toolbar">
						<span class="grip"></span>
						{@render tools(bar)}
					</div>
				{/each}
			</div>
		{/each}
	</div>

	<div class="workspace">
		<aside class="navigator">
			<div class="panel">
				<div class="panel-head">
					<h2>Navigateur de projet - Afficher</h2>
					<button aria-label="Épingler">{@render icon('pin')}</button>
					<button aria-label="Fermer le panneau">{@render icon('close')}</button>
				</div>
				<div class="tree-area">
					<ul class="tree">
						{#each tree as [level, toggle, check, glyph, label], i}
							<li class:first={i === 0}>
								{#each { length: level } as _}<span class="guide"></span>{/each}
								<span class="branch" class:last={isLast(i)}>
									{#if toggle}<button class="toggle" class:open={toggle === '-'} aria-label={label}></button>{/if}
								</span>
								<label class:strong={i === 2}>
									<input type="checkbox" checked={check === 'on'} indeterminate={check === 'partial'} class:partial={check === 'partial'} />
									{@render icon(glyph)}
									<span>{label}</span>
								</label>
								{#if i === 2}<span class="mark mark-root"></span>{/if}
								{#if i === 9}<span class="mark mark-leaf"></span>{/if}
							</li>
						{/each}
					</ul>
					<div class="scrollbar">
						<button aria-label="Vers le haut"><svg viewBox="0 0 10 10"><path d="M2 7l3-3 3 3" /></svg></button>
						<div class="thumb"></div>
						<button aria-label="Vers le bas"><svg viewBox="0 0 10 10"><path d="M2 3l3 3 3-3" /></svg></button>
					</div>
				</div>
			</div>
			<div class="nav-tabs">
				{#each navTabs as [glyph, label]}
					<button class:active={label === 'Afficher'}>{@render icon(glyph)}{label}</button>
				{/each}
			</div>
		</aside>

		<main>
			<section class="canvas">
				<p>Déformations globales u [mm]<br />CC1<br />Charges [kN/m]</p>
				<svg class="scene" viewBox="930 310 430 205" aria-label="Poutre console déformée">
					<!-- fixed support -->
					<path d="M936 378l17-8h10l-18 9z" fill="#68d868" />
					<path d="M945 379l18-9v38l-18 7z" fill="#38f838" />
					<path d="M936 378l9 1v36h-9z" fill="#80ff80" />
					<path d="M948 408l15-6v6l-14 6z" fill="#40d840" />
					<!-- I-beam: web, lower flange, upper flange -->
					<path d="M954 385l393 57v19l-393-56z" fill="#7878f4" />
					<path d="M954 385h9v19l-9-1z" fill="#5670c8" />
					<path d="M948 405l6-2 9 1 389 55-11 5z" fill="#47479c" />
					<path d="M948 385l15-5 389 58-11 6z" fill="#47479c" />
					<path d="M948 385l393 58.500" stroke="#38388c" fill="none" />
					<path d="M1341 443.500l11-5M1341 464l11-6M1346.500 442v18" stroke="#f02020" fill="none" />
					<!-- trapezoidal line load -->
					<path d="M954 331l65 2v44l-65-9z" fill="#cbcbe6" stroke="#000080" />
					<path d="M951.500 362.500h5l-2.500 4zM1016.500 372.500h5l-2.500 4z" fill="#000080" stroke="#000080" />
					<path d="M952 329h4v4h-4zM1017 331h4v4h-4z" fill="#000080" />
					<!-- deflection line -->
					<path d="M954 393Q1040 404 1120 430L1346 495" stroke="#808000" fill="none" />
					<path d="M1346.500 463v31" stroke="#808000" stroke-dasharray="1 1" />
					<path d="M1345 493h3v3h-3z" fill="#808000" />
					<path d="M952 391h4v4h-4z" fill="#f00" />
					<path d="M1345 450h3v3h-3z" fill="#800000" />
					<g font-size="9" font-family="Liberation Sans, Arial, sans-serif">
						<text x="944" y="324" fill="#000080">5.000</text>
						<text x="1009" y="327" fill="#000080">6.000</text>
						<text x="1340" y="509" fill="#808000">4.0</text>
					</g>
				</svg>
				<p>Max u: 4.0, Min u: 0.0 mm</p>
			</section>

			<section class="tables">
				<div class="tables-top">
					<div class="tables-head">
						<h2>4.2 Nœuds - Déplacements</h2>
						<button aria-label="Épingler">{@render icon('pin')}</button>
						<button aria-label="Fermer le tableau">{@render icon('close')}</button>
					</div>
					<div class="tables-tools">{@render tools(tableBar)}</div>
				</div>
				<div class="sheet">
					<table>
						<thead>
							<tr class="letters">
								<th class="corner" rowspan="3">Nœud<br />n°</th>
								{#each columns as column, i}<th class:current={i === 0}>{column}</th>{/each}
								<th class="rest"></th>
							</tr>
							<tr class="groups">
								<th colspan="4">Déplacements [mm]</th>
								<th colspan="3">Rotations [mrad]</th>
								<td></td>
							</tr>
							<tr class="symbols">
								{#each symbols as [base, sub]}<th>{base}<small>{sub}</small></th>{/each}
								<td></td>
							</tr>
						</thead>
						<tbody>
							{#each results as row}
								<tr class={row.kind}>
									<th>{row.head}</th>
									{#each row.cells as value, i}
										<td><span class={barClass(row.kind, i, value)}>{value}</span></td>
									{/each}
									<td class="rest"></td>
								</tr>
							{/each}
							<tr class="filler">
								<th></th>
								{#each columns as _}<td></td>{/each}
								<td class="rest"></td>
							</tr>
						</tbody>
					</table>
				</div>
				<div class="sheet-tabs">
					{#each sheetTabs as tab, i}<button class:active={i === 2}>{tab}</button>{/each}
				</div>
			</section>
		</main>
	</div>

	<footer class="statusbar">
		<div class="modes">
			{#each modes as [mode, width]}
				<button class:raised={mode === 'GRILLE'} style="width: {width}px">{mode}</button>
			{/each}
		</div>
		{#each fields as width}<span class="field" style="width: {width}px"></span>{/each}
	</footer>
</div>

<style>
	:global(body) {
		margin: 0;
	}

	.app {
		display: flex;
		flex-direction: column;
		height: 100vh;
		overflow: hidden;
		background: #d0d4dd;
		color: #000;
		font-family: 'Noto Sans', 'Open Sans', sans-serif;
		font-size: 11px;
		line-height: 18px;
	}

	button {
		display: inline-flex;
		align-items: center;
		justify-content: center;
		padding: 0;
		border: 0;
		background: none;
		color: inherit;
		font: inherit;
		white-space: nowrap;
	}

	h1,
	h2,
	p,
	ul {
		margin: 0;
		padding: 0;
		font-size: inherit;
		font-weight: normal;
	}

	.icon {
		flex: none;
		width: 16px;
		height: 16px;
	}

	/* title bar and menu */
	.titlebar {
		display: flex;
		flex: none;
		align-items: center;
		gap: 5px;
		height: 23px;
		padding-left: 2px;
		background: #0078d7;
		color: #fff;
	}

	.window-buttons {
		display: flex;
		margin-left: auto;
	}

	.window-buttons button {
		width: 46px;
		height: 20px;
	}

	.window-buttons svg {
		width: 12px;
		height: 12px;
		fill: none;
		stroke: #fff;
	}

	.menubar {
		display: flex;
		flex: none;
		align-items: center;
		height: 24px;
		color: #4b4f58;
	}

	.grip {
		flex: none;
		width: 10px;
		height: 16px;
		background: radial-gradient(circle at 5px 2px, #a5abb8 1px, transparent 1px) 0 0 / 10px 4px;
	}

	.menus {
		display: flex;
		margin-left: 3px;
	}

	.menus button {
		padding: 0 8px 0 7px;
	}

	.mdi-buttons {
		display: flex;
		gap: 6px;
		margin-left: auto;
		padding: 6px 4px 0 0;
	}

	.mdi-buttons svg {
		width: 10px;
		height: 10px;
		fill: none;
		stroke: #6b6b6b;
		stroke-width: 2;
	}

	/* toolbars */
	.toolbars {
		flex: none;
		padding-top: 1px;
		border-bottom: 1px solid #a9adb7;
	}

	.toolbar-line {
		display: flex;
		gap: 1px;
		height: 26px;
	}

	.toolbar-line:last-child {
		height: 24px;
	}

	.toolbar {
		box-sizing: border-box;
		display: flex;
		align-items: center;
		height: 25px;
		padding-right: 1px;
		border-bottom: 1px solid #b1b5c0;
		border-radius: 3px;
		background: linear-gradient(#eceff7, #e4e8f1 50%, #d3d8e4);
	}

	.tool {
		flex: none;
		width: 22px;
		height: 21px;
	}

	.tool.pressed {
		border: 1px solid #9c8a6a;
		background: linear-gradient(#fbd7a6, #ffb35c 50%, #ffdf9c);
	}

	.tool.split {
		gap: 5px;
		width: 35px;
	}

	.caret {
		border: 3px solid transparent;
		border-top-color: #777c88;
		border-bottom: 0;
	}

	.separator {
		flex: none;
		width: 2px;
		height: 15px;
		margin: 0 3px;
		border-left: 1px solid #a5a9b5;
		box-sizing: border-box;
		background: #fff;
	}

	.combo {
		position: relative;
		display: flex;
		width: 216px;
		height: 19px;
		margin: 0 2px;
	}

	.combo select {
		width: 100%;
		padding: 0 4px;
		border: 0;
		appearance: none;
		background: #fff;
		font: inherit;
	}

	.combo-arrow {
		position: absolute;
		top: 1px;
		right: 0;
		bottom: 1px;
		display: flex;
		align-items: center;
		justify-content: center;
		width: 14px;
		background: #cdd4e0;
		pointer-events: none;
	}

	/* navigator */
	.workspace {
		display: flex;
		flex: 1;
		gap: 5px;
		min-height: 0;
	}

	.navigator {
		display: flex;
		flex: none;
		flex-direction: column;
		width: 390px;
	}

	.panel {
		display: flex;
		flex: 1;
		flex-direction: column;
		min-height: 0;
		border: 1px solid #8f95a5;
		border-top-color: #e6e9f0;
		background: #e7ebf4;
	}

	.panel-head {
		display: flex;
		flex: none;
		align-items: center;
		height: 18px;
		padding: 0 1px 0 3px;
		border-bottom: 1px solid #8f95a5;
		background: #b9bfca;
		color: #3d4148;
	}

	.panel-head h2,
	.tables-head h2 {
		flex: 1;
	}

	.tree-area {
		display: flex;
		flex: 1;
		min-height: 0;
		padding: 2px 2px 0;
	}

	.tree {
		flex: 1;
		overflow: hidden;
		background: #fcfbf4;
		list-style: none;
	}

	.tree li {
		position: relative;
		display: flex;
		height: 18px;
		padding-left: 2px;
	}

	.guide,
	.branch {
		flex: none;
		width: 19px;
		background: repeating-linear-gradient(#888 0 1px, transparent 1px 2px) 9px 0 / 1px 100% no-repeat;
	}

	.branch {
		display: flex;
		align-items: center;
		width: 22px;
		background:
			repeating-linear-gradient(90deg, #888 0 1px, transparent 1px 2px) 9px 9px / 11px 1px no-repeat,
			repeating-linear-gradient(#888 0 1px, transparent 1px 2px) 9px 0 / 1px 100% no-repeat;
	}

	.branch.last {
		background-size: 11px 1px, 1px 9px;
	}

	.first .branch {
		background-position: 9px 9px, 9px 9px;
	}

	.toggle {
		width: 9px;
		height: 9px;
		margin-left: 5px;
		border: 1px solid #919191;
		background:
			linear-gradient(#2b4b9b, #2b4b9b) center / 5px 1px no-repeat,
			linear-gradient(#2b4b9b, #2b4b9b) center / 1px 5px no-repeat,
			linear-gradient(#fff, #dcdcdc);
	}

	.toggle.open {
		background:
			linear-gradient(#2b4b9b, #2b4b9b) center / 5px 1px no-repeat,
			linear-gradient(#fff, #dcdcdc);
	}

	.tree label {
		display: flex;
		align-items: center;
		gap: 2px;
		white-space: nowrap;
	}

	.tree label span {
		padding-left: 3px;
	}

	.strong {
		font-weight: bold;
	}

	.tree input {
		flex: none;
		display: grid;
		place-items: center;
		width: 13px;
		height: 13px;
		margin: 0;
		border: 1px solid #454545;
		appearance: none;
		background: linear-gradient(135deg, #fff, #ccd3e2);
	}

	.tree input:checked::before {
		width: 9px;
		height: 9px;
		background: #111;
		clip-path: polygon(0 45%, 22% 45%, 38% 62%, 82% 5%, 100% 15%, 42% 98%, 32% 98%);
		content: '';
	}

	.tree input.partial::before {
		width: 7px;
		height: 7px;
		background: #999;
		content: '';
	}

	.mark {
		position: absolute;
		border: 3px solid #ed4f49;
		pointer-events: none;
	}

	.mark-root {
		inset: 1px auto 0 0;
		width: 120px;
	}

	.mark-leaf {
		inset: -3px auto -1px 41px;
		width: 177px;
	}

	.scrollbar {
		display: flex;
		flex: none;
		flex-direction: column;
		width: 16px;
		background: #f0f0f0;
	}

	.scrollbar button {
		height: 17px;
	}

	.scrollbar svg {
		width: 10px;
		height: 10px;
		fill: none;
		stroke: #555;
		stroke-width: 2;
	}

	.thumb {
		height: 63%;
		margin-bottom: auto;
		background: #cdcdcd;
	}

	.nav-tabs {
		display: flex;
		flex: none;
		gap: 3px;
		height: 23px;
		padding-left: 2px;
		color: #4b4f58;
	}

	.nav-tabs button {
		gap: 2px;
		height: 20px;
		padding: 0 4px;
	}

	.nav-tabs .active {
		border-radius: 2px;
		background: #eceef2;
		box-shadow: 0 0 1px 1px #dce8ee;
	}

	/* model view */
	main {
		display: flex;
		flex: 1;
		flex-direction: column;
		gap: 4px;
		min-width: 0;
	}

	.canvas {
		position: relative;
		display: flex;
		flex: 1;
		flex-direction: column;
		justify-content: space-between;
		min-height: 0;
		margin-right: 2px;
		padding: 7px 4px;
		border: solid #6e7074;
		border-width: 1px 0 0 2px;
		background: #fff;
		font: 11px/14px 'Liberation Sans', Arial, sans-serif;
	}

	.scene {
		position: absolute;
		top: 210px;
		left: 533px;
		width: 430px;
		height: 205px;
	}

	/* result tables */
	.tables {
		display: flex;
		flex: none;
		flex-direction: column;
		height: 332px;
		background: #f0f0f0;
	}

	.tables-top {
		flex: none;
		background: linear-gradient(#e9edf6, #dde2ec);
		border-bottom: 2px solid #72747a;
	}

	.tables-head {
		display: flex;
		align-items: center;
		height: 20px;
		padding: 0 2px 0 4px;
		color: #3d4148;
	}

	.tables-tools {
		display: flex;
		align-items: center;
		height: 24px;
		padding-left: 9px;
	}

	.tables-tools .combo {
		width: 196px;
	}

	.sheet {
		flex: 1;
		min-height: 0;
		padding: 2px 2px 4px;
		border: solid #72747a;
		border-width: 0 2px 2px 1px;
	}

	table {
		width: 100%;
		height: 100%;
		border-spacing: 0;
		table-layout: fixed;
		font: 11px/15px 'Liberation Sans', Arial, sans-serif;
	}

	th,
	td {
		box-sizing: border-box;
		width: 78px;
		height: 16px;
		padding: 0;
		border: solid #a0a0a0;
		border-width: 0 1px 1px 0;
		font-weight: normal;
	}

	tr > :last-child {
		width: auto;
		border-right: 0;
	}

	.letters th {
		height: 14px;
		border-color: #666;
		background: #e0e0e0;
		box-shadow: inset 1px 1px #fff;
		line-height: 12px;
	}

	.letters .corner {
		width: 46px;
		line-height: 14px;
	}

	.letters .current,
	.current > th {
		background: #0078d7;
		color: #fff;
		box-shadow: none;
	}

	.groups > * {
		height: 16px;
		border-bottom: 0;
	}

	.symbols > * {
		height: 17px;
	}

	small {
		margin-left: 1px;
		font-size: 9px;
	}

	tbody th {
		border-color: #666;
		background: #e0e0e0;
		box-shadow: inset 1px 1px #fff;
	}

	tbody td {
		padding: 1px 3px 1px 5px;
		text-align: right;
	}

	tbody td span {
		display: block;
		height: 12px;
		line-height: 13px;
	}

	tbody .current td {
		background: #ffffc0;
	}

	tbody .plain td {
		background: #f8f8ff;
	}

	tbody .extreme td {
		background: #fffaf0;
		font-size: 12px;
		font-weight: bold;
	}

	tbody tr .rest,
	tbody .filler td {
		background: #f0f0f0;
	}

	.bar {
		border-left: 1px solid #b8b8b8;
	}

	.positive {
		background: #d6e3fd;
	}

	.negative {
		border-left: 0;
		background: #ffbfbf;
	}

	.filler > * {
		height: auto;
		border-bottom: 0;
		box-shadow: none;
	}

	.sheet-tabs {
		display: flex;
		flex: none;
		align-items: flex-start;
		height: 36px;
		font: 11px/16px Roboto, 'Liberation Sans', sans-serif;
	}

	.sheet-tabs button {
		height: 17px;
		padding: 0 2px;
		border: solid #6b6b6b;
		border-width: 0 1px 1px 0;
		border-radius: 0 0 4px 4px;
		background: #e0e0e0;
	}

	.sheet-tabs .active {
		background: #f7f7f7;
	}

	/* status bar */
	.statusbar {
		display: flex;
		flex: none;
		align-items: center;
		justify-content: flex-end;
		height: 21px;
		border-top: 1px solid #a4a9b5;
		box-sizing: border-box;
		background: linear-gradient(#dcdfe8, #b9bdc9 40%, #a5a9b2 50%, #b8bcc5);
	}

	.modes {
		display: flex;
		gap: 2px;
		padding-right: 1px;
		color: #2f3238;
	}

	.modes button {
		box-sizing: border-box;
		height: 19px;
		border: solid #fff;
		border-width: 0 1px 1px 0;
		box-shadow: inset 1px 1px #000;
	}

	.modes .raised {
		background: #c5c9d1;
		box-shadow: inset 1px 1px #fff;
	}

	.field {
		box-sizing: border-box;
		height: 17px;
		border-left: 1px solid #8f939c;
	}
</style>
